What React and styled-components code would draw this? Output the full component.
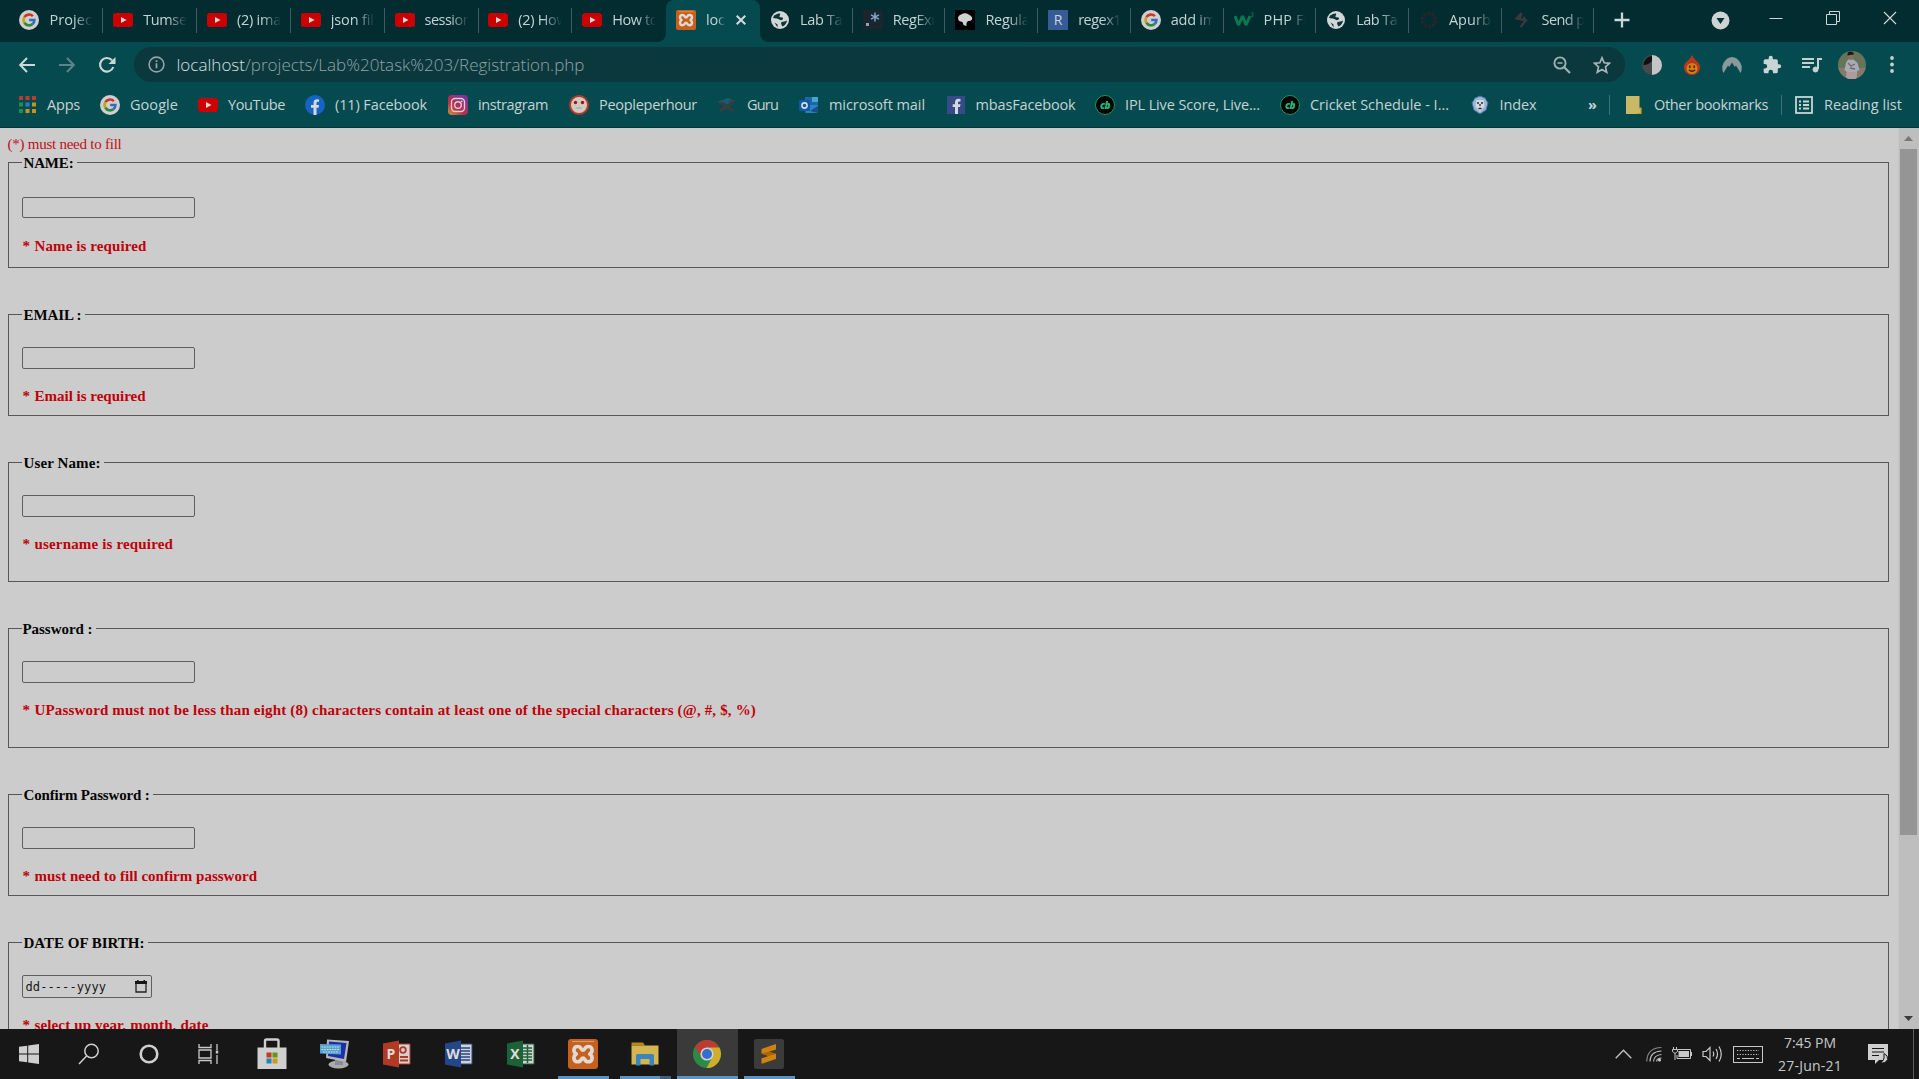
import React, { useLayoutEffect, useRef, useState } from "react";
import styled, { createGlobalStyle, css } from "styled-components";

const ui = '"Open Sans", "Noto Sans", sans-serif';
const serif = '"Liberation Serif", serif';

const Global = createGlobalStyle`
  * { box-sizing: border-box; }
  html, body { margin: 0; padding: 0; background: #cccccc; overflow: hidden; }
  svg { display: block; flex: none; }
`;

const Screen = styled.div`
  width: 1919px;
  height: 1079px;
  display: flex;
  flex-direction: column;
  overflow: hidden;
`;

/* ---------- text that is tracked to a known width ---------- */
const Tracked = styled.span`
  display: inline-block;
  white-space: pre;
`;

function Fit({ w, children }) {
  const ref = useRef(null);
  const [spacing, setSpacing] = useState(0);
  useLayoutEffect(() => {
    const natural = ref.current.getBoundingClientRect().width;
    setSpacing((w - natural) / ref.current.textContent.length);
  }, [w]);
  return (
    <Tracked ref={ref} style={{ letterSpacing: `${spacing}px` }}>
      {children}
    </Tracked>
  );
}

/* ---------- browser frame ---------- */
const Browser = styled.header`
  flex: none;
  height: 128px;
  display: flex;
  flex-direction: column;
  background: #044a4f;
  border-bottom: 1px solid #06373b;
  color: #c4d3d4;
  font-family: ${ui};
`;

const TabStrip = styled.div`
  height: 42px;
  display: flex;
  align-items: flex-start;
  padding-left: 9.7px;
  background: #032c30;
`;

const Tab = styled.div`
  position: relative;
  flex: none;
  width: ${(p) => p.$w}px;
  height: 42px;
  display: flex;
  align-items: center;
  padding: 0 9px 2px ${(p) => p.$pad}px;
  gap: 10px;
  ${(p) =>
    p.$line &&
    css`
      background: linear-gradient(#3d5f62, #3d5f62) right 8px / 1px 25px no-repeat;
    `}
  ${(p) =>
    p.$active &&
    css`
      background: #044a4f;
      border-radius: 8px 8px 0 0;
      &::before,
      &::after {
        content: "";
        position: absolute;
        bottom: 0;
        width: 8px;
        height: 8px;
      }
      &::before {
        left: -8px;
        background: radial-gradient(circle at 0 0, transparent 7.5px, #044a4f 8px);
      }
      &::after {
        right: -8px;
        background: radial-gradient(circle at 100% 0, transparent 7.5px, #044a4f 8px);
      }
    `}
`;

const TabTitle = styled.span`
  flex: ${(p) => (p.$short ? "0 0 20px" : "1 1 0")};
  min-width: 0;
  overflow: hidden;
  white-space: nowrap;
  font-size: 14.5px;
  line-height: 22px;
  mask-image: linear-gradient(to right, #000 55%, transparent 98%);
`;

const Slot = styled.div`
  flex: none;
  width: ${(p) => p.$w}px;
  height: ${(p) => p.$h || 40}px;
  display: flex;
  align-items: center;
  justify-content: center;
`;

const Spacer = styled.div`
  flex: 1;
`;

const Toolbar = styled.div`
  height: 45px;
  display: flex;
  align-items: center;
  padding: 0 7px 0 6.5px;
`;

const Omnibox = styled.div`
  flex: 1;
  height: 35px;
  margin: 0 7.5px 0 7px;
  padding: 0 2.5px 0 14px;
  display: flex;
  align-items: center;
  border-radius: 18px;
  background: #0b383d;
`;

const Url = styled.div`
  flex: 1;
  padding-left: 12px;
  font-size: 17px;
  font-weight: 300;
  line-height: 24px;
  color: #8fa5a7;
  b {
    font-weight: 300;
    color: #d5e0e0;
  }
`;

const Bookmarks = styled.nav`
  height: 36px;
  display: flex;
  align-items: center;
  padding-left: 19px;
  font-size: 14.5px;
  line-height: 20px;
`;

const Bookmark = styled.div`
  flex: none;
  width: ${(p) => p.$w}px;
  display: flex;
  align-items: center;
  gap: 10px;
  white-space: nowrap;
`;

const IconBox = styled.span`
  flex: none;
  width: ${(p) => p.$w || 20}px;
  height: 20px;
  display: flex;
  align-items: center;
  justify-content: ${(p) => (p.$left ? "flex-start" : "center")};
`;

const More = styled.div`
  flex: none;
  width: 22px;
  padding-left: 1px;
  font-weight: 700;
`;

const Divider = styled.div`
  flex: none;
  width: 1px;
  height: 20px;
  background: #3d7376;
  margin-right: ${(p) => p.$after}px;
`;

/* ---------- page ---------- */
const Viewport = styled.div`
  flex: 1;
  min-height: 0;
  display: flex;
  background: #cccccc;
`;

const Page = styled.main`
  flex: 1;
  padding: 8px 9px 0 7.5px;
  overflow: hidden;
  font-family: ${serif};
  font-size: 15px;
`;

const Hint = styled.div`
  height: 18px;
  line-height: 17px;
  color: #c01018;
`;

const Group = styled.fieldset`
  margin: 0 0 38px;
  padding: 0 13px;
  height: ${(p) => p.$h}px;
  border: 1px solid #575757;
  min-width: 0;
`;

const Legend = styled.legend`
  padding: 0 3px 0 ${(p) => p.$pad}px;
  height: 17px;
  line-height: 19px;
  font-weight: 700;
  color: #050505;
`;

const TextInput = styled.input`
  display: block;
  width: 173px;
  height: ${(p) => p.$h}px;
  margin: ${(p) => p.$top}px 0 0;
  padding: 1px 2px;
  border: 1px solid #5f5f5f;
  border-radius: 2px;
  background: #cccccc;
`;

const DateInput = styled.div`
  width: 130px;
  height: 23px;
  margin-top: ${(p) => p.$top}px;
  padding: 0 4px 0 3px;
  display: flex;
  align-items: center;
  justify-content: space-between;
  border: 1px solid #5f5f5f;
  border-radius: 2px;
  font: 12px "DejaVu Sans Mono", monospace;
  letter-spacing: 0.1px;
  color: #161616;
`;

const Problem = styled.div`
  margin-top: ${(p) => p.$top}px;
  height: 18px;
  line-height: 18px;
  padding-left: 1px;
  font-weight: 700;
  color: #c00008;
  display: flex;
`;

const Star = styled.span`
  width: 12px;
`;

const ScrollTrack = styled.div`
  flex: none;
  width: 21px;
  display: flex;
  flex-direction: column;
  align-items: center;
  padding-right: 1px;
  background: #bebebe;
  border-left: 1px solid #c6c6c6;
`;

const ScrollArrow = styled.div`
  height: 21px;
  display: flex;
  align-items: center;
  color: ${(p) => p.$c};
`;

const ScrollThumb = styled.div`
  width: 17px;
  height: 686px;
  background: #959595;
`;

/* ---------- taskbar ---------- */
const Taskbar = styled.footer`
  flex: none;
  height: 50px;
  display: flex;
  background: #171717;
  color: #cfcfcf;
  font-family: ${ui};
`;

const TaskButton = styled.div`
  flex: none;
  width: ${(p) => p.$w || 62}px;
  height: 50px;
  display: flex;
  align-items: center;
  justify-content: center;
  ${(p) =>
    p.$running &&
    css`
      background: linear-gradient(#5f93bf, #5f93bf) center bottom / 51px 3px no-repeat;
    `}
  ${(p) =>
    p.$stacked &&
    css`
      background: linear-gradient(to right, #5f93bf 40px, #3f6078 40px) center bottom / 51px 3px no-repeat;
    `}
  ${(p) =>
    p.$focused &&
    css`
      background: linear-gradient(#5f93bf, #5f93bf) center bottom / 61px 3px no-repeat,
        linear-gradient(#3a3a3a, #3a3a3a) center / 61px 50px no-repeat;
    `}
`;

const Clock = styled.div`
  width: 82px;
  text-align: center;
  font-size: 14px;
  line-height: 23px;
  padding-top: 2px;
  color: #c8c8c8;
`;

const ShowDesktop = styled.div`
  width: 6px;
  border-left: 1px solid #5c5c5c;
`;

/* ---------- drawings ---------- */
const GoogleIcon = () => (
  <svg width="20" height="20" viewBox="0 0 20 20">
    <circle cx="10" cy="10" r="10" fill="#cfcfcf" />
    <g fill="none" strokeWidth="2.6">
      <path d="M13.9 6.2A5.4 5.4 0 0 0 5.4 7.2" stroke="#c9372c" />
      <path d="M5.4 7.2A5.4 5.4 0 0 0 5.4 12.8" stroke="#caa018" />
      <path d="M5.4 12.8A5.4 5.4 0 0 0 13.6 14" stroke="#2b8a45" />
      <path d="M13.6 14A5.4 5.4 0 0 0 15.4 10H10.2" stroke="#356ac3" />
    </g>
  </svg>
);

const YouTubeIcon = () => (
  <svg width="20" height="20" viewBox="0 0 20 20">
    <rect x="0" y="3" width="20" height="14" rx="3" fill="#cc0000" />
    <path d="M8 7l5.5 3L8 13z" fill="#d8d8d8" />
  </svg>
);

const XamppIcon = ({ size = 20 }) => (
  <svg width={size} height={size} viewBox="0 0 30 30">
    <rect width="30" height="30" rx="3" fill="#c8601d" />
    <path d="M4 2.500h22" stroke="#d99a6a" strokeWidth="1.200" />
    <path
      d="M15 11.300C13 11.300 13.500 7.500 9.800 7.500C5.500 7.500 4.500 12.500 8.300 15C4.500 17.500 5.500 22.800 9.800 22.800C13.500 22.800 13 19 15 19C17 19 16.500 22.800 20.200 22.800C24.500 22.800 25.500 17.500 21.700 15C25.500 12.500 24.500 7.500 20.200 7.500C16.500 7.500 17 11.300 15 11.300Z"
      fill="none"
      stroke="#dedad6"
      strokeWidth="3.600"
      strokeLinejoin="round"
    />
    <path d="M12.500 15h5" stroke="#c8601d" strokeWidth="3.500" />
  </svg>
);

const GlobeIcon = () => (
  <svg width="20" height="20" viewBox="0 0 20 20">
    <circle cx="10" cy="10" r="9" fill="#d2d6d6" />
    <path d="M4 5.500c2-.8 3.500-2.500 6-2 .8 1.500-1 2-.5 3.500 1.500.5 2.500-.2 3.500 1 .5 1.500-1.500 2.500-3 2-1.500-1-2.500-1.500-4-1.500L3 8zM11.500 12c2 0 4-1 5.500-1.500-.3 2.500-1.800 4.800-4.500 6-.8-1.500-2-3-1-4.500zM4.500 12.500l3 2v3z" fill="#0a3539" />
  </svg>
);

const RegexrIcon = () => (
  <svg width="20" height="20" viewBox="0 0 20 20">
    <rect width="20" height="20" fill="#1b252d" />
    <rect x="3" y="13" width="3" height="3" fill="#84a6c0" />
    <path d="M12 2.500v9M8 4.800l8 4.400M16 4.800l-8 4.400" stroke="#7fa8c8" strokeWidth="1.500" />
  </svg>
);

const BlackIcon = () => (
  <svg width="20" height="20" viewBox="0 0 20 20">
    <rect width="20" height="20" fill="#000" />
    <path d="M3 8.500q0-3 3-4 5-2.500 8.500.5 3.500 2 2.500 4.500-1.500 2-4 1.500l-1.500 2v3l-3-1-1-3Q3 11.500 3 8.500z" fill="#d0d0d0" />
  </svg>
);

const LetterBox = styled.span`
  width: 20px;
  height: 20px;
  background: ${(p) => p.$bg};
  color: #ccd3dc;
  display: flex;
  align-items: center;
  justify-content: center;
  font-size: 14px;
  line-height: 20px;
`;

const W3Icon = () => (
  <svg width="20" height="20" viewBox="0 0 20 20">
    <path d="M1 6l3.500 9 4-9 3.500 9 4-9" fill="none" stroke="#087a50" strokeWidth="3" strokeLinejoin="bevel" />
    <path d="M17 3h2.300l-1.300 1.700q1.800.3 1 1.800-1 .8-2 0" fill="none" stroke="#087a50" strokeWidth=".8" />
  </svg>
);

const DimRing = () => (
  <svg width="20" height="20" viewBox="0 0 20 20">
    <circle cx="10" cy="10" r="6.500" fill="none" stroke="#21272d" strokeWidth="4" strokeDasharray="3 1" />
  </svg>
);

const DimBolt = () => (
  <svg width="20" height="20" viewBox="0 0 20 20">
    <path d="M9.500 3L4.500 8.500 14 10.500 8.500 17M9.500 3.500l-2 6M14 10.500L11 7" fill="none" stroke="#40393b" strokeWidth="2" />
  </svg>
);

const CloseIcon = ({ s = 10, w = 2 }) => (
  <svg width={s} height={s} viewBox="0 0 10 10">
    <path d="M.7.7l8.600 8.600M9.300.7L.7 9.300" stroke="#d0dbdb" strokeWidth={w} />
  </svg>
);

const AppsIcon = () => (
  <svg width="18" height="18" viewBox="0 0 18 18">
    {["#b93c30", "#b93c30", "#b93c30", "#1d8e4b", "#2e78c0", "#c69219", "#1d8e4b", "#c69219", "#c69219"].map((c, i) => (
      <rect key={i} x={(i % 3) * 6.5} y={Math.floor(i / 3) * 6.5} width="4" height="4" fill={c} />
    ))}
  </svg>
);

const FacebookRound = () => (
  <svg width="20" height="20" viewBox="0 0 20 20">
    <circle cx="10" cy="10" r="10" fill="#1464c4" />
    <path d="M8.500 20v-7.200H6v-2.900h2.500V8q0-3.800 3.600-3.800l2 .2v2.400h-1.300q-1.300 0-1.300 1.400v1.700h2.600l-.5 2.900h-2.100V20z" fill="#d5d9df" />
  </svg>
);

const InstagramIcon = () => (
  <svg width="20" height="20" viewBox="0 0 20 20">
    <defs>
      <linearGradient id="ig" x1="0" y1="1" x2=".8" y2="0">
        <stop offset="0" stopColor="#cf9b37" />
        <stop offset=".4" stopColor="#bf2e46" />
        <stop offset="1" stopColor="#7b31a3" />
      </linearGradient>
    </defs>
    <rect width="20" height="20" rx="4" fill="url(#ig)" />
    <g fill="none" stroke="#d6cfd6" strokeWidth="1.4">
      <rect x="3.500" y="3.500" width="13" height="13" rx="3.500" />
      <circle cx="10" cy="10" r="3.300" />
    </g>
    <circle cx="13.700" cy="6.300" r=".9" fill="#d6cfd6" />
  </svg>
);

const PeopleIcon = () => (
  <svg width="20" height="20" viewBox="0 0 20 20">
    <circle cx="10" cy="10" r="9" fill="#cfcac4" stroke="#b83a26" strokeWidth="2" />
    <circle cx="6.500" cy="7.500" r="1.700" fill="#a41212" />
    <circle cx="13.500" cy="7.500" r="1.700" fill="#a41212" />
    <path d="M7.500 13h5" stroke="#a79a90" />
  </svg>
);

const GuruIcon = () => (
  <svg width="20" height="20" viewBox="0 0 20 20">
    <path d="M1 6.500L11 3l7 3-9 4z" fill="#1b5c74" />
    <path d="M3 16L15 8M5 8l11 8" stroke="#353f42" strokeWidth="3" />
    <path d="M2 8h4M12 6l5 1" stroke="#403a3c" strokeWidth="2" />
  </svg>
);

const OutlookIcon = () => (
  <svg width="20" height="20" viewBox="0 0 20 20">
    <path d="M6 2h13v16H6z" fill="#1c67a8" />
    <path d="M13 2h6v5h-6z" fill="#45a6d0" />
    <path d="M7 10l12 0v8H7z" fill="#2b83c6" />
    <path d="M19 11l-8 5 8 2z" fill="#184f87" />
    <rect x="0" y="5" width="11" height="11" rx="1" fill="#0f58a6" />
    <circle cx="5.500" cy="10.500" r="2.600" fill="none" stroke="#d5dce2" strokeWidth="1.6" />
  </svg>
);

const FacebookSquare = () => (
  <svg width="18" height="18" viewBox="0 0 18 18">
    <rect width="18" height="18" fill="#354a86" />
    <path d="M8 18v-7H5.700V8.200H8V6.200Q8 2.700 11.500 2.700l2 .2v2.500h-1.300q-1.200 0-1.200 1.200v1.600h2.500L13 11h-2v7z" fill="#d3d7e0" />
  </svg>
);

const CricketBadge = styled.span`
  width: 20px;
  height: 20px;
  border: 1.5px solid #1f9465;
  border-radius: 50%;
  background: #000;
  color: #22b87c;
  font: italic 800 10px/18px ${ui};
  letter-spacing: -0.5px;
  text-align: center;
`;

const LionIcon = () => (
  <svg width="18" height="20" viewBox="0 0 18 20">
    <path d="M9 1l5 2 3 5-2 7-6 4-6-4L1 8l3-5z" fill="#9bb5cf" stroke="#3f6fa8" />
    <path d="M5.500 5h7l1 6-4.500 6-4.500-6z" fill="#d5dadd" />
    <path d="M6 8h2M10 8h2M9 9v2M7.500 13.500h3" stroke="#222c38" strokeWidth="1.3" />
  </svg>
);

const FolderNote = () => (
  <svg width="16" height="18" viewBox="0 0 16 18">
    <path d="M0 0h13.500v12H15v6H0z" fill="#c9b866" />
    <path d="M12.500 12H15v5.500h-4" fill="none" stroke="#c79d23" strokeWidth="1.2" />
  </svg>
);

const ReadingIcon = () => (
  <svg width="18" height="18" viewBox="0 0 18 18" fill="none" stroke="#c6d5d5" strokeWidth="1.800">
    <rect x="1" y="1" width="16" height="16" />
    <path d="M4 5.500h2M8 5.500h6M4 9h2M8 9h6M4 12.500h2M8 12.500h6" />
  </svg>
);

const Flip = styled.svg`
  transform: ${(p) => (p.$flip ? "scaleX(-1)" : "none")};
`;

const ArrowIcon = ({ flip, color }) => (
  <Flip $flip={flip} width="16" height="16" viewBox="0 0 16 16">
    <path d="M16 8H1.500M8 1L1.200 8 8 15" fill="none" stroke={color} strokeWidth="2" />
  </Flip>
);

const ReloadIcon = () => (
  <svg width="18" height="18" viewBox="0 0 18 18">
    <path d="M15.300 11A6.800 6.800 0 1 1 14 4.300" fill="none" stroke="#cbd8d8" strokeWidth="2.100" />
    <path d="M17.500 1v7h-7z" fill="#cbd8d8" />
  </svg>
);

const InfoIcon = () => (
  <svg width="17" height="17" viewBox="0 0 17 17">
    <circle cx="8.500" cy="8.500" r="7.400" fill="none" stroke="#93a5a7" strokeWidth="1.600" />
    <path d="M8.500 7.300v5M8.500 4.300v1.800" stroke="#93a5a7" strokeWidth="1.800" />
  </svg>
);

const ZoomOutIcon = () => (
  <svg width="18" height="18" viewBox="0 0 18 18" fill="none" stroke="#9fb0b1">
    <circle cx="7" cy="7" r="5.600" strokeWidth="1.900" />
    <path d="M11 11l6 6" strokeWidth="2.200" />
    <path d="M4.500 7h5" strokeWidth="1.500" />
  </svg>
);

const StarIcon = () => (
  <svg width="18" height="18" viewBox="0 0 18 18">
    <path d="M9 1.800l2.200 5 5.300.5-4 3.600 1.200 5.300L9 13.400l-4.700 2.800 1.200-5.300-4-3.600 5.300-.5z" fill="none" stroke="#a5b5b6" strokeWidth="1.700" />
  </svg>
);

const HalfMoon = () => (
  <svg width="20" height="20" viewBox="0 0 20 20">
    <circle cx="10" cy="10" r="10" fill="#48494b" />
    <path d="M10 1a9 9 0 0 0-8.500 9q5 0 8.500-4z" fill="#101010" />
    <path d="M10 0a10 10 0 0 1 0 20z" fill="#c2c6c7" />
  </svg>
);

const FlameIcon = () => (
  <svg width="18" height="20" viewBox="0 0 18 20">
    <path d="M9 0q1 3 4.500 6 4 3 3.500 7Q16 20 9 20T1 13q-.5-4 3.500-7Q8 3 9 0z" fill="#b9371b" />
    <circle cx="9" cy="13.500" r="5.500" fill="#d27f15" />
    <path d="M6.800 10.500v2.500M11.200 10.500v2.500M6 15q3 2.500 6 0" stroke="#3e1c08" strokeWidth="1.400" fill="none" />
  </svg>
);

const HornIcon = () => (
  <svg width="20" height="18" viewBox="0 0 20 18">
    <path d="M1.500 17Q-1 12 1.500 7 5 1 10 1t8.500 6q2.500 5 0 10L14 9.500l-1.200 1.500L10 6.500 7.200 11 6 9.500z" fill="#8b999d" />
  </svg>
);

const PuzzleIcon = () => (
  <svg width="20" height="20" viewBox="0 0 24 24">
    <path d="M20.500 11H19V7a2 2 0 0 0-2-2h-4V3.500a2.500 2.500 0 0 0-5 0V5H4a2 2 0 0 0-2 2v3.800h1.500a2.700 2.700 0 0 1 0 5.400H2V20a2 2 0 0 0 2 2h3.800v-1.500a2.700 2.700 0 0 1 5.400 0V22H17a2 2 0 0 0 2-2v-4h1.500a2.500 2.500 0 0 0 0-5z" fill="#c8d5d6" />
  </svg>
);

const MusicIcon = () => (
  <svg width="20" height="18" viewBox="0 0 20 18" fill="none" stroke="#c5d2d3" strokeWidth="2">
    <path d="M0 3h12M0 7h12M0 11h8M16 13V3h4" />
    <circle cx="13.500" cy="13.500" r="2.500" fill="#c5d2d3" strokeWidth="1" />
  </svg>
);

const Avatar = () => (
  <svg width="28" height="28" viewBox="0 0 28 28">
    <defs>
      <clipPath id="av"><circle cx="14" cy="14" r="14" /></clipPath>
    </defs>
    <g clipPath="url(#av)">
      <rect width="28" height="28" fill="#67745a" />
      <path d="M0 17h28v11H0z" fill="#857a68" />
      <path d="M10 8.500h5.500l4 3.500 2 7-2.500 1-.5 8H8.500l.5-7-2.500-2 1.500-7z" fill="#a6acb4" />
      <path d="M8.500 21h9.500v7H8z" fill="#b09a9c" />
      <path d="M10 2q3-2.500 5.500 0v5.500q-2.500 2.500-5 0z" fill="#8d6c5a" />
      <path d="M9.500 4.500q-.5-4 3-4t3.300 3z" fill="#1d1b1a" />
      <path d="M10 12l3 3 4-2M12 17l5 1" stroke="#75666c" strokeWidth="1.300" fill="none" />
    </g>
  </svg>
);

const DotsIcon = () => (
  <svg width="4" height="17" viewBox="0 0 4 17" fill="#c5d2d3">
    <circle cx="2" cy="2" r="1.900" />
    <circle cx="2" cy="8.500" r="1.900" />
    <circle cx="2" cy="15" r="1.900" />
  </svg>
);

const PlusIcon = () => (
  <svg width="16" height="16" viewBox="0 0 16 16">
    <path d="M8 .5v15M.5 8h15" stroke="#cbd8d8" strokeWidth="2.300" />
  </svg>
);

const CircleDown = () => (
  <svg width="19" height="19" viewBox="0 0 19 19">
    <circle cx="9.500" cy="9.500" r="9" fill="#cdd2d3" />
    <path d="M5.500 7h8l-4 6z" fill="#0a3034" />
  </svg>
);

const Minimize = () => (
  <svg width="14" height="14" viewBox="0 0 14 14">
    <path d="M.5 7.500h13" stroke="#cbd8d8" />
  </svg>
);

const Restore = () => (
  <svg width="14" height="14" viewBox="0 0 14 14" fill="none" stroke="#cbd8d8">
    <path d="M.5 3.500h10v10H.5zM3.500 3.500V.5h10v10h-3" />
  </svg>
);

const Calendar = () => (
  <svg width="12" height="13" viewBox="0 0 12 13">
    <path d="M1 2h10v10H1z" fill="none" stroke="#222" strokeWidth="1.300" />
    <path d="M0 1h12v3H0zM2 0h1.500v2H2zM8.500 0H10v2H8.500z" fill="#161616" />
  </svg>
);

const WindowsIcon = () => (
  <svg width="20" height="20" viewBox="0 0 20 20" fill="#cfcfcf">
    <path d="M0 2.800L8.200 1.700v7.800H0zM9.200 1.500L20 0v9.500H9.200zM0 10.500h8.200v7.800L0 17.200zM9.200 10.500H20V20L9.200 18.500z" />
  </svg>
);

const SearchIcon = () => (
  <svg width="22" height="22" viewBox="0 0 22 22" fill="none" stroke="#cfcfcf" strokeWidth="1.500">
    <circle cx="13.500" cy="8" r="6.700" />
    <path d="M8.800 12.800L1 21" />
  </svg>
);

const CortanaIcon = () => (
  <svg width="20" height="20" viewBox="0 0 20 20">
    <circle cx="10" cy="10" r="8.300" fill="none" stroke="#d0d0d0" strokeWidth="2.600" />
  </svg>
);

const TaskViewIcon = () => (
  <svg width="21" height="20" viewBox="0 0 21 20" fill="none" stroke="#c9c9c9" strokeWidth="1.300">
    <path d="M1 0v3.500h12V0M1 20v-3.500h12V20M1 6h12v8H1zM19 0v6M19 11v9" />
    <rect x="17.800" y="6.500" width="2.400" height="3" fill="#c9c9c9" stroke="none" />
  </svg>
);

const StoreIcon = () => (
  <svg width="30" height="32" viewBox="0 0 30 32">
    <path d="M8 10V3q0-1.500 1.500-1.500h10.500q1.500 0 1.500 1.500v7" fill="none" stroke="#cfcfcf" strokeWidth="2.400" />
    <path d="M.5 9.500h29V31h-29z" fill="#d0d0d0" />
    <path d="M9.500 14.500h5v5h-5z" fill="#c23b22" />
    <path d="M15.500 14.500h5v5h-5z" fill="#5f9620" />
    <path d="M9.500 20.500h5v5h-5z" fill="#1c86b8" />
    <path d="M15.500 20.500h5v5h-5z" fill="#cf981c" />
  </svg>
);

const MonitorIcon = () => (
  <svg width="30" height="30" viewBox="0 0 30 30">
    <ellipse cx="18.500" cy="25.500" rx="10" ry="4" fill="#a9acad" />
    <path d="M15 18h8v8h-8z" fill="#8a8d90" />
    <path d="M7 .5l22 1.500-3 21L6 19z" fill="#b4b8bb" />
    <path d="M9 2.500l17.500 1.500-2.500 16L8 17z" fill="#1f2fa8" />
    <path d="M0 5l21 .5v10L0 14.500z" fill="#57a3cf" />
    <path d="M1.500 8h18M1.500 10.500h18M3 13h15" stroke="#c6dbe6" strokeWidth="1.100" strokeDasharray="1.800 .8" />
  </svg>
);

const OfficeLetter = styled.span`
  grid-area: 1 / 1;
  width: 16px;
  text-align: center;
  color: #e0dcda;
  font: 700 14px/28px ${ui};
`;

const OfficeBox = styled.span`
  display: grid;
  align-items: center;
  svg { grid-area: 1 / 1; }
`;

const OfficeIcon = ({ letter, color }) => (
  <OfficeBox>
    <svg width="28" height="28" viewBox="0 0 28 28">
      <path d="M14 4h13v20H14z" fill="#d2d2d2" stroke={color} />
      {letter === "P" ? (
        <g fill="none" stroke={color} strokeWidth="1.800">
          <circle cx="20" cy="10" r="2.800" />
          <path d="M17 17h8M17 20.500h8" />
        </g>
      ) : (
        <path d="M16 8h9M16 11h9M16 14h9M16 17h9M16 20h9" stroke={color} strokeWidth="1.300" />
      )}
      {letter === "X" && <path d="M20.500 5v18" stroke={color} strokeWidth="1.500" />}
      <path d="M0 3.500L16 .5v27L0 24.500z" fill={color} />
    </svg>
    <OfficeLetter>{letter}</OfficeLetter>
  </OfficeBox>
);

const ExplorerIcon = () => (
  <svg width="28" height="26" viewBox="0 0 28 26">
    <path d="M.5 1.500H12l2 3H.5z" fill="#b98913" />
    <path d="M.5 4.500h27v19H.5z" fill="#d3b551" />
    <path d="M5 24.500V14.500q0-1.500 1.500-1.500h15q1.500 0 1.500 1.500v10h-4.500V18h-9v6.500z" fill="#3a85bd" />
  </svg>
);

const ChromeIcon = () => (
  <svg width="28" height="28" viewBox="0 0 28 28">
    <circle cx="14" cy="14" r="14" fill="#2a8b46" />
    <path d="M14 14L1.900 7A14 14 0 0 1 26.100 7z" fill="#bd3b30" />
    <path d="M14 7.500h12.400A14 14 0 0 1 13.500 28l6.100-11z" fill="#cfae2c" />
    <path d="M1.900 7l6.500 10.200L14 14 9 7z" fill="#bd3b30" />
    <circle cx="14" cy="14" r="6.600" fill="#d2d2d2" />
    <circle cx="14" cy="14" r="5" fill="#356fcb" />
  </svg>
);

const SublimeIcon = () => (
  <svg width="30" height="30" viewBox="0 0 30 30">
    <rect width="30" height="30" rx="2.500" fill="#3b3b3b" />
    <path d="M22 5v5.500l-7 2.300 7 2.300V20L7.500 24.800v-5.500l7-2.300-7-2.500V10z" fill="#cf8210" />
    <path d="M7.500 14.500l7 2.500 7.500-2.300-7-2z" fill="#a8640a" />
  </svg>
);

const ChevronUp = () => (
  <svg width="17" height="10" viewBox="0 0 17 10">
    <path d="M.7 9.300l7.800-8 7.800 8" fill="none" stroke="#c0c0c0" strokeWidth="1.400" />
  </svg>
);

const WifiIcon = () => (
  <svg width="16" height="16" viewBox="0 0 16 16" fill="none" stroke="#b8b8b8" strokeWidth="1.200">
    <path d="M.7 15.500Q1 2 15.500 1.500" stroke="#858585" />
    <path d="M4 15.500Q4 5.500 15.500 5M7.500 15.500Q8 9 15.500 8.500M10.500 15.500q.5-3.500 5-3.500" />
    <circle cx="13.500" cy="14" r="1.500" fill="#d0d0d0" stroke="none" />
  </svg>
);

const BatteryIcon = () => (
  <svg width="20" height="14" viewBox="0 0 20 14" fill="none" stroke="#c8c8c8">
    <path d="M6 2.500h12.500v9H5V8" />
    <path d="M6.500 4h10.500v6H6.500zM19 5h1v4h-1z" fill="#c8c8c8" stroke="none" />
    <path d="M1.500 0v2M4.500 0v2M.5 2.500h5v2L3 6.500.5 4.500zM3 6.500V13" />
  </svg>
);

const VolumeIcon = () => (
  <svg width="21" height="18" viewBox="0 0 21 18" fill="none" stroke="#c8c8c8" strokeWidth="1.200">
    <path d="M1 6.500h3l4-4v13l-4-4H1zM11 6.500q1.500 2.500 0 5M14 4q3 5 0 10M17 1.500q4.500 7.500 0 15" />
  </svg>
);

const KeyboardIcon = () => (
  <svg width="30" height="17" viewBox="0 0 30 17" fill="none" stroke="#c8c8c8">
    <rect x=".5" y=".5" width="29" height="16" />
    <path d="M4 4.500h22M4 8.500h22" strokeWidth="1.200" strokeDasharray="1.200 1.500" />
    <path d="M4 12.500h3M9 12.500h12M23 12.500h3" strokeWidth="1.200" />
  </svg>
);

const NoticeIcon = () => (
  <svg width="21" height="21" viewBox="0 0 21 21">
    <path d="M0 0h20v16h-9l-4 4v-4H0z" fill="#cfcfcf" />
    <path d="M4 4.500h12M4 8h12M4 11.500h7" stroke="#171717" strokeWidth="1.200" />
    <path d="M16 9.500q4.500 2 3.500 6-2 4.500-7.500 3 4-1.500 4-4.500z" fill="#cfcfcf" stroke="#171717" />
  </svg>
);

/* ---------- data ---------- */
const tabs = [
  [<GoogleIcon />, "Project", 48],
  [<YouTubeIcon />, "Tumse", 43.5],
  [<YouTubeIcon />, "(2) ima", 44],
  [<YouTubeIcon />, "json fil", 43],
  [<YouTubeIcon />, "session", 46.5],
  [<YouTubeIcon />, "(2) How", 49],
  [<YouTubeIcon />, "How to", 46],
  [<XamppIcon />, "loc", 19, true],
  [<GlobeIcon />, "Lab Ta", 42],
  [<RegexrIcon />, "RegExr", 44],
  [<BlackIcon />, "Regula", 44],
  [<LetterBox $bg="#365b97">R</LetterBox>, "regex1", 43],
  [<GoogleIcon />, "add im", 45],
  [<W3Icon />, "PHP Fi", 44],
  [<GlobeIcon />, "Lab Ta", 41],
  [<DimRing />, "Apurb", 42],
  [<DimBolt />, "Send p", 43],
];

const bookmarks = [
  [<AppsIcon />, "Apps", 33, 81, 18],
  [<GoogleIcon />, "Google", 48, 98],
  [<YouTubeIcon />, "YouTube", 57, 107],
  [<FacebookRound />, "(11) Facebook", 92, 143],
  [<InstagramIcon />, "instragram", 70, 121],
  [<PeopleIcon />, "Peopleperhour", 98, 148],
  [<GuruIcon />, "Guru", 31, 82],
  [<OutlookIcon />, "microsoft mail", 96, 146.5],
  [<FacebookSquare />, "mbasFacebook", 100, 149.5],
  [<CricketBadge>cb</CricketBadge>, "IPL Live Score, Live...", 135, 185],
  [<CricketBadge>cb</CricketBadge>, "Cricket Schedule - I...", 139, 189.5],
  [<LionIcon />, "Index", 37, 117.5],
];

const fields = [
  { legend: "NAME:", lw: 50, h: 114, top: 26, ih: 21, gap: 19, msg: "Name is required", mw: 112 },
  { legend: "EMAIL :", lw: 58, h: 110, msg: "Email is required", mw: 111 },
  { legend: "User Name:", lw: 77, h: 128, msg: "username is required", mw: 138.5 },
  { legend: "Password :", lw: 70, pad: 1, h: 128, msg: "UPassword must not be less than eight (8) characters contain at least one of the special characters (@, #, $, %)", mw: 721.5 },
  { legend: "Confirm Password :", lw: 126, h: 110, msg: "must need to fill confirm password", mw: 222.5 },
  { legend: "DATE OF BIRTH:", lw: 121, h: 128, date: true, msg: "select up year, month, date", mw: 174 },
];

const iconInset = (i) => (i < 8 ? 9.7 : 10);

export default function App() {
  return (
    <Screen>
      <Global />
      <Browser>
        <TabStrip>
          {tabs.map(([icon, title, tw, active], i) => (
            <Tab key={i} $w={i < 8 ? 93.8 : 92.7} $pad={iconInset(i)} $active={active} $line={!active && i !== 6}>
              <IconBox>{icon}</IconBox>
              <TabTitle $short={active}><Fit w={tw}>{title}</Fit></TabTitle>
              {active && <CloseIcon />}
            </Tab>
          ))}
          <Slot $w={56}><PlusIcon /></Slot>
          <Spacer />
          <Slot $w={40} $h={41}><CircleDown /></Slot>
          <Slot $w={7} />
          <Slot $w={57} $h={35}><Minimize /></Slot>
          <Slot $w={57} $h={35}><Restore /></Slot>
          <Slot $w={57.5} $h={35}><CloseIcon s={14} w={0.8} /></Slot>
        </TabStrip>
        <Toolbar>
          <Slot $w={40}><ArrowIcon color="#cbd8d8" /></Slot>
          <Slot $w={40}><ArrowIcon flip color="#5b8587" /></Slot>
          <Slot $w={40}><ReloadIcon /></Slot>
          <Omnibox>
            <InfoIcon />
            <Url>
              <Fit w={408}>
                <b>localhost</b>/projects/Lab%20task%203/Registration.php
              </Fit>
            </Url>
            <Slot $w={40}><ZoomOutIcon /></Slot>
            <Slot $w={40}><StarIcon /></Slot>
          </Omnibox>
          <Slot $w={40}><HalfMoon /></Slot>
          <Slot $w={40}><FlameIcon /></Slot>
          <Slot $w={40}><HornIcon /></Slot>
          <Slot $w={40}><PuzzleIcon /></Slot>
          <Slot $w={40}><MusicIcon /></Slot>
          <Slot $w={40}><Avatar /></Slot>
          <Slot $w={40}><DotsIcon /></Slot>
        </Toolbar>
        <Bookmarks>
          {bookmarks.map(([icon, text, tw, w, iw]) => (
            <Bookmark key={text} $w={w}>
              <IconBox $w={iw}>{icon}</IconBox>
              <Fit w={tw}>{text}</Fit>
            </Bookmark>
          ))}
          <More>»</More>
          <Divider $after={16} />
          <Bookmark $w={155}>
            <IconBox $w={18} $left><FolderNote /></IconBox>
            <Fit w={114}>Other bookmarks</Fit>
          </Bookmark>
          <Divider $after={13} />
          <Bookmark $w={120}>
            <IconBox $w={19} $left><ReadingIcon /></IconBox>
            <Fit w={78}>Reading list</Fit>
          </Bookmark>
        </Bookmarks>
      </Browser>
      <Viewport>
        <Page>
          <Hint><Fit w={114}>(*) must need to fill</Fit></Hint>
          {fields.map((f) => (
            <Group key={f.legend} $h={f.h}>
              <Legend $pad={f.pad || 2}><Fit w={f.lw}>{f.legend}</Fit></Legend>
              {f.date ? (
                <DateInput $top={24}>dd-----yyyy<Calendar /></DateInput>
              ) : (
                <TextInput $top={f.top || 24} $h={f.ih || 22} />
              )}
              <Problem $top={f.gap || 18}>
                <Star>*</Star>
                <Fit w={f.mw}>{f.msg}</Fit>
              </Problem>
            </Group>
          ))}
        </Page>
        <ScrollTrack>
          <ScrollArrow $c="#777777">
            <svg width="9" height="5" viewBox="0 0 9 5"><path d="M0 5l4.500-5L9 5z" fill="currentColor" /></svg>
          </ScrollArrow>
          <ScrollThumb />
          <Spacer />
          <ScrollArrow $c="#3c3c3c">
            <svg width="9" height="5" viewBox="0 0 9 5"><path d="M0 0l4.500 5L9 0z" fill="currentColor" /></svg>
          </ScrollArrow>
        </ScrollTrack>
      </Viewport>
      <Taskbar>
        <TaskButton $w={58}><WindowsIcon /></TaskButton>
        <TaskButton $w={62}><SearchIcon /></TaskButton>
        <TaskButton $w={57}><CortanaIcon /></TaskButton>
        <TaskButton $w={63}><TaskViewIcon /></TaskButton>
        <TaskButton $w={64}><StoreIcon /></TaskButton>
        <TaskButton><MonitorIcon /></TaskButton>
        <TaskButton><OfficeIcon letter="P" color="#b03a24" /></TaskButton>
        <TaskButton><OfficeIcon letter="W" color="#24478a" /></TaskButton>
        <TaskButton><OfficeIcon letter="X" color="#1c6239" /></TaskButton>
        <TaskButton $running><XamppIcon size={30} /></TaskButton>
        <TaskButton $stacked><ExplorerIcon /></TaskButton>
        <TaskButton $focused><ChromeIcon /></TaskButton>
        <TaskButton $running><SublimeIcon /></TaskButton>
        <Spacer />
        <Slot $w={30} $h={50}><ChevronUp /></Slot>
        <Slot $w={31} $h={50}><WifiIcon /></Slot>
        <Slot $w={26} $h={50}><BatteryIcon /></Slot>
        <Slot $w={34} $h={50}><VolumeIcon /></Slot>
        <Slot $w={38} $h={50}><KeyboardIcon /></Slot>
        <Slot $w={2} />
        <Clock>
          <div><Fit w={52}>7:45 PM</Fit></div>
          <div><Fit w={64}>27-Jun-21</Fit></div>
        </Clock>
        <Slot $w={54} $h={50}><NoticeIcon /></Slot>
        <Slot $w={8} />
        <ShowDesktop />
      </Taskbar>
    </Screen>
  );
}
